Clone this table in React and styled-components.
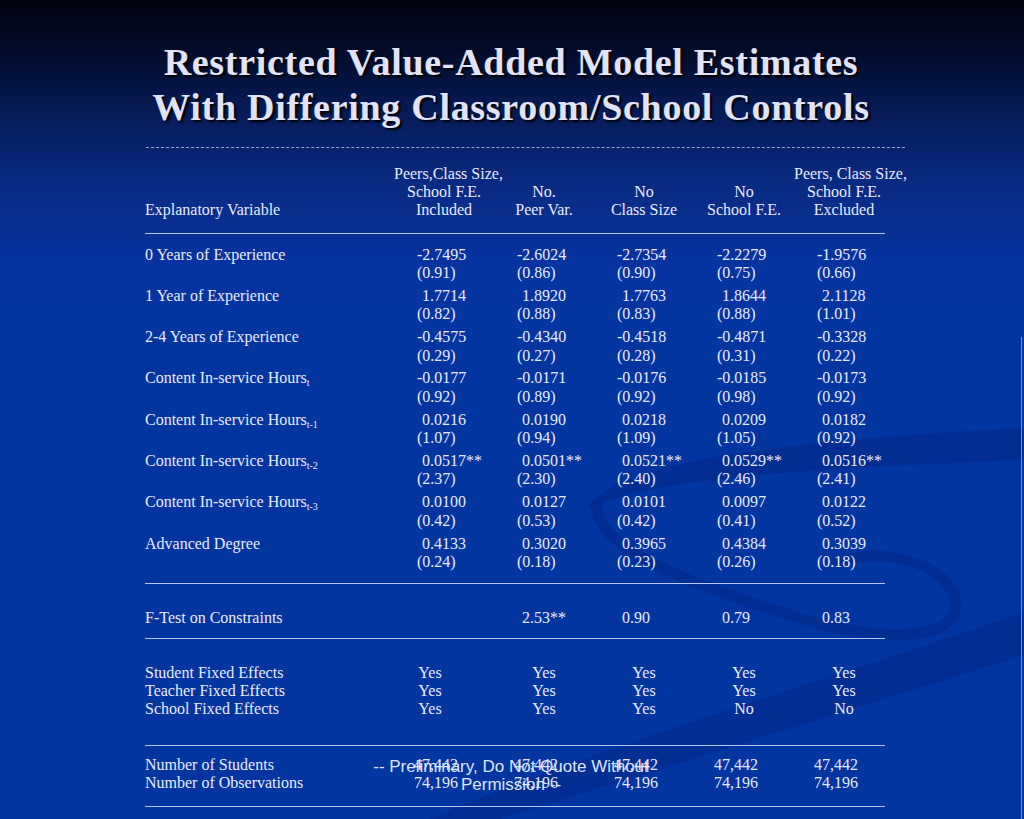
import React from 'react';
import styled, { createGlobalStyle } from 'styled-components';

const columns = [
  ['Peers,Class Size,', 'School F.E.', 'Included'],
  ['', 'No.', 'Peer Var.'],
  ['', 'No', 'Class Size'],
  ['', 'No', 'School F.E.'],
  ['Peers, Class Size,', 'School F.E.', 'Excluded'],
];

const estimates = [
  { label: '0 Years of Experience', values: ['-2.7495', '-2.6024', '-2.7354', '-2.2279', '-1.9576'], se: ['0.91', '0.86', '0.90', '0.75', '0.66'] },
  { label: '1 Year of Experience', values: ['1.7714', '1.8920', '1.7763', '1.8644', '2.1128'], se: ['0.82', '0.88', '0.83', '0.88', '1.01'] },
  { label: '2-4 Years of Experience', values: ['-0.4575', '-0.4340', '-0.4518', '-0.4871', '-0.3328'], se: ['0.29', '0.27', '0.28', '0.31', '0.22'] },
  { label: 'Content In-service Hours', sub: 't', values: ['-0.0177', '-0.0171', '-0.0176', '-0.0185', '-0.0173'], se: ['0.92', '0.89', '0.92', '0.98', '0.92'] },
  { label: 'Content In-service Hours', sub: 't-1', values: ['0.0216', '0.0190', '0.0218', '0.0209', '0.0182'], se: ['1.07', '0.94', '1.09', '1.05', '0.92'] },
  { label: 'Content In-service Hours', sub: 't-2', values: ['0.0517**', '0.0501**', '0.0521**', '0.0529**', '0.0516**'], se: ['2.37', '2.30', '2.40', '2.46', '2.41'] },
  { label: 'Content In-service Hours', sub: 't-3', values: ['0.0100', '0.0127', '0.0101', '0.0097', '0.0122'], se: ['0.42', '0.53', '0.42', '0.41', '0.52'] },
  { label: 'Advanced Degree', values: ['0.4133', '0.3020', '0.3965', '0.4384', '0.3039'], se: ['0.24', '0.18', '0.23', '0.26', '0.18'] },
];

const fTest = ['', '2.53**', '0.90', '0.79', '0.83'];

const effects = [
  { label: 'Student Fixed Effects', values: ['Yes', 'Yes', 'Yes', 'Yes', 'Yes'] },
  { label: 'Teacher Fixed Effects', values: ['Yes', 'Yes', 'Yes', 'Yes', 'Yes'] },
  { label: 'School Fixed Effects', values: ['Yes', 'Yes', 'Yes', 'No', 'No'] },
];

const counts = [
  { label: 'Number of Students', values: ['47,442', '47,442', '47,442', '47,442', '47,442'] },
  { label: 'Number of Observations', values: ['74,196', '74,196', '74,196', '74,196', '74,196'] },
];

const isPositive = (v) => v !== '' && !v.startsWith('-');

const App = () => {
  return (
    <>
      <GlobalStyle />
      <Slide>
        <Decor viewBox="0 0 1024 819" preserveAspectRatio="none">
          <Band d="M588 508 C610 462, 790 440, 1024 428 L1024 460 C820 468, 650 478, 588 508 Z" />
          <Curve d="M598 500 C585 545, 690 585, 800 618 C885 645, 965 640, 955 598 C945 560, 870 545, 835 565" />
          <Band d="M430 819 C600 745, 800 690, 1024 612 L1024 655 C810 722, 620 782, 500 819 Z" />
        </Decor>
        <EdgeLine />

        <Content>
          <Title>
            Restricted Value-Added Model Estimates
            <br />
            With Differing Classroom/School Controls
          </Title>
          <TitleRule />

          <Table>
            <HeaderRow>
              <div>Explanatory Variable</div>
              {columns.map((lines, i) => (
                <HeaderCell key={i}>
                  {lines.map((line, j) => (
                    <div key={j}>{line || '\u00a0'}</div>
                  ))}
                </HeaderCell>
              ))}
            </HeaderRow>
            <Rule $top={14} />

            <Blocks>
              {estimates.map((row, i) => (
                <DataRow key={i}>
                  <Label>
                    {row.label}
                    {row.sub && <Sub>{row.sub}</Sub>}
                  </Label>
                  {row.values.map((v, j) => (
                    <Cell key={j}>
                      <Value $pos={isPositive(v)}>{v}</Value>
                      <Value>({row.se[j]})</Value>
                    </Cell>
                  ))}
                </DataRow>
              ))}
            </Blocks>

            <Rule $top={11} />
            <DataRow $top={25} $bottom={11}>
              <Label>F-Test on Constraints</Label>
              {fTest.map((v, j) => (
                <Cell key={j}>
                  <Value $pos={isPositive(v)}>{v}</Value>
                </Cell>
              ))}
            </DataRow>
            <Rule />

            <Lines $top={25} $bottom={27}>
              {effects.map((row, i) => (
                <LineRow key={i}>
                  <Label>{row.label}</Label>
                  {row.values.map((v, j) => (
                    <Flag key={j} $first={j === 0}>
                      {v}
                    </Flag>
                  ))}
                </LineRow>
              ))}
            </Lines>
            <Rule />

            <Lines $top={10} $bottom={14}>
              {counts.map((row, i) => (
                <LineRow key={i}>
                  <Label>{row.label}</Label>
                  {row.values.map((v, j) => (
                    <Count key={j}>{v}</Count>
                  ))}
                </LineRow>
              ))}
            </Lines>
            <Rule />
          </Table>
        </Content>

        <Note>-- Preliminary, Do Not Quote Without Permission --</Note>
      </Slide>
    </>
  );
};

const GlobalStyle = createGlobalStyle`
  html, body {
    margin: 0;
    padding: 0;
    background: #0335a0;
  }
`;

const Slide = styled.div`
  position: relative;
  width: 1024px;
  height: 819px;
  overflow: hidden;
  background: linear-gradient(
    180deg,
    #01030d 0px,
    #030a26 45px,
    #061a55 110px,
    #092a80 180px,
    #0733a0 260px,
    #0335a0 330px
  );
  font-family: 'Liberation Serif', 'Times New Roman', serif;
  color: #e8ecff;
`;

const Decor = styled.svg`
  position: absolute;
  inset: 0;
  width: 1024px;
  height: 819px;
  z-index: 0;
`;

const Band = styled.path`
  fill: rgba(0, 30, 120, 0.32);
`;

const Curve = styled.path`
  fill: none;
  stroke: rgba(0, 30, 120, 0.28);
  stroke-width: 11;
`;

const EdgeLine = styled.div`
  position: absolute;
  right: 2px;
  top: 337px;
  bottom: 0;
  width: 1px;
  background: rgba(150, 170, 235, 0.75);
  box-shadow: -2px 0 0 rgba(0, 30, 110, 0.5);
`;

const Content = styled.div`
  position: relative;
  z-index: 1;
  padding-top: 40px;
`;

const Title = styled.h1`
  margin: 0;
  text-align: center;
  padding-right: 2px;
  font-family: 'Liberation Serif', 'Times New Roman', serif;
  font-weight: bold;
  font-size: 38px;
  line-height: 45px;
  letter-spacing: 0.7px;
  color: #e2e2f8;
  text-shadow: 2px 2px 2px #000;
`;

const TitleRule = styled.div`
  margin: 17px 0 0 146px;
  width: 759px;
  border-top: 1px dashed rgba(200, 212, 245, 0.75);
`;

const Table = styled.div`
  padding-left: 145px;
  font-size: 16px;
`;

const HeaderRow = styled.div`
  display: grid;
  grid-template-columns: 249px repeat(5, 100px);
  align-items: end;
  margin-top: 17px;
  line-height: 18px;
`;

const HeaderCell = styled.div`
  text-align: center;
  white-space: nowrap;
`;

const Rule = styled.div`
  width: 740px;
  height: 1px;
  margin-top: ${({ $top }) => ($top ? `${$top}px` : '0')};
  background: rgba(215, 225, 250, 0.85);
`;

const Blocks = styled.div`
  display: flex;
  flex-direction: column;
  gap: 4.3px;
  margin-top: 11.5px;
`;

const DataRow = styled.div`
  display: grid;
  grid-template-columns: 272px repeat(5, 100px);
  line-height: 18.5px;
  margin-top: ${({ $top }) => ($top ? `${$top}px` : '0')};
  margin-bottom: ${({ $bottom }) => ($bottom ? `${$bottom}px` : '0')};
`;

const Label = styled.div`
  white-space: nowrap;
`;

const Sub = styled.sub`
  font-size: 10px;
  line-height: 0;
  vertical-align: -3px;
`;

const Cell = styled.div`
  display: flex;
  flex-direction: column;
`;

const Value = styled.div`
  padding-left: ${({ $pos }) => ($pos ? '5px' : '0')};
  white-space: nowrap;
  min-height: 18.5px;
`;

const Lines = styled.div`
  margin-top: ${({ $top }) => $top}px;
  margin-bottom: ${({ $bottom }) => $bottom}px;
`;

const LineRow = styled.div`
  display: grid;
  grid-template-columns: 272px repeat(5, 100px);
  line-height: 18px;
`;

const Flag = styled.div`
  width: ${({ $first }) => ($first ? '26px' : '54px')};
  text-align: center;
`;

const Count = styled.div`
  margin-left: -3px;
`;

const Note = styled.div`
  position: absolute;
  z-index: 2;
  left: 356px;
  top: 758px;
  width: 310px;
  text-align: center;
  font-family: 'Liberation Sans', Arial, sans-serif;
  font-size: 17px;
  line-height: 18px;
  color: #dfe6ff;
`;

export default App;
